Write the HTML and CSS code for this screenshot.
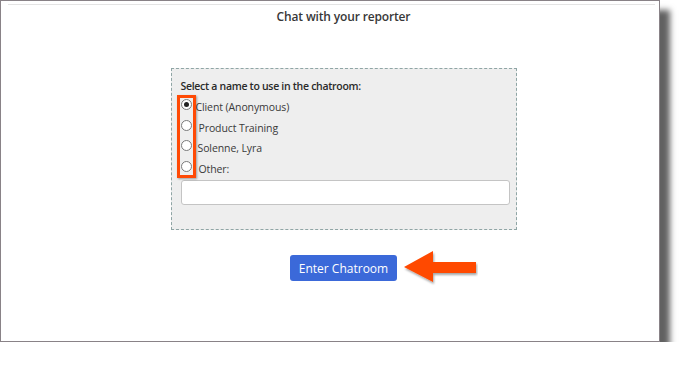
FILE: index.html
```html
<!DOCTYPE html>
<html>
<head>
<meta charset="utf-8">
<link rel="stylesheet" href="styles.css">
</head>
<body>
<div class="frame">
  <div class="topline"></div>
  <div class="content">
    <h1 class="title">Chat with your reporter</h1>
    <div class="panel">
      <div class="prompt">Select a name to use in the chatroom:</div>
      <div class="options">
        <label class="opt"><span class="radio checked"></span><span class="txt t1">Client (Anonymous)</span></label>
        <label class="opt"><span class="radio"></span><span class="txt">Product Training</span></label>
        <label class="opt"><span class="radio"></span><span class="txt t3">Solenne, Lyra</span></label>
        <label class="opt"><span class="radio"></span><span class="txt">Other:</span></label>
        <div class="highlight"></div>
      </div>
      <div class="field"></div>
    </div>
    <div class="actions">
      <button class="btn">Enter Chatroom</button>
      <svg class="arrow" width="76" height="36" viewBox="0 0 76 36">
        <defs>
          <filter id="sh" x="-10%" y="-10%" width="130%" height="140%">
            <feDropShadow dx="1" dy="2" stdDeviation="1" flood-color="#000" flood-opacity="0.35"/>
          </filter>
        </defs>
        <polygon filter="url(#sh)" points="2,17 31,1 31,12 74,12 74,23 31,23 31,32" fill="#ff4a05"/>
      </svg>
    </div>
  </div>
</div>
</body>
</html>
```
FILE: styles.css
```css
* { box-sizing: border-box; }
html, body { margin: 0; padding: 0; background: #fff; }
body { font-family: "Open Sans", "Liberation Sans", sans-serif; color: #333; }

.frame {
  width: 660px;
  height: 342px;
  border: 1px solid #898287;
  background: #fff;
  box-shadow: 10px 10px 6px rgba(0,0,0,0.62);
  overflow: hidden;
}
.topline {
  height: 1px;
  margin: 3px 4px 0 7px;
  background: #e4e4e4;
}
.content {
  width: 685px;
  display: flex;
  flex-direction: column;
  align-items: center;
}
.title {
  margin: 0;
  padding-top: 3px;
  font-size: 12px;
  font-weight: 600;
  line-height: 17px;
  color: #383838;
  letter-spacing: -0.15px;
}
.panel {
  margin-top: 43px;
  width: 346px;
  height: 162px;
  border: 1px dashed #8fa5a5;
  background: #eeeeee;
  padding: 10px 6px 0 9px;
}
.prompt {
  font-size: 10.5px;
  font-weight: 600;
  line-height: 14px;
  color: #2a2a2a;
  letter-spacing: -0.3px;
}
.options {
  position: relative;
  margin-top: 5px;
  display: flex;
  flex-direction: column;
}
.opt {
  display: flex;
  align-items: flex-start;
  height: 20.5px;
  font-size: 10.5px;
  color: #3a3a3a;
}
.radio {
  width: 11px;
  height: 11px;
  border-radius: 50%;
  border: 1px solid #7a7a7a;
  background: #fff;
  margin-top: 1px;
  flex: none;
  position: relative;
}
.radio.checked::after {
  content: "";
  position: absolute;
  left: 2px; top: 2px;
  width: 5px; height: 5px;
  border-radius: 50%;
  background: #222;
}
.txt { margin-left: 7px; line-height: 16px; margin-top: 1px; letter-spacing: -0.1px; }
.t1 { margin-left: 4px; }
.t3 { margin-left: 6px; }
.highlight {
  position: absolute;
  left: -4px;
  top: -3px;
  width: 19px;
  height: 83px;
  border: 3px solid #ff4a05;
  box-shadow: 1px 1px 2px rgba(0,0,0,0.35);
}
.field {
  margin-top: 0;
  width: 329px;
  height: 25px;
  background: #fff;
  border: 1px solid #c4c4c4;
  border-radius: 3px;
}
.actions {
  margin-top: 25px;
  position: relative;
  display: flex;
}
.btn {
  width: 107px;
  height: 26px;
  border: none;
  border-radius: 3px;
  background: #3b69d9;
  color: #fff;
  font-family: "Open Sans", "Liberation Sans", sans-serif;
  font-size: 12px;
  padding: 0;
}
.arrow {
  position: absolute;
  left: 112px;
  top: -5px;
}
```
